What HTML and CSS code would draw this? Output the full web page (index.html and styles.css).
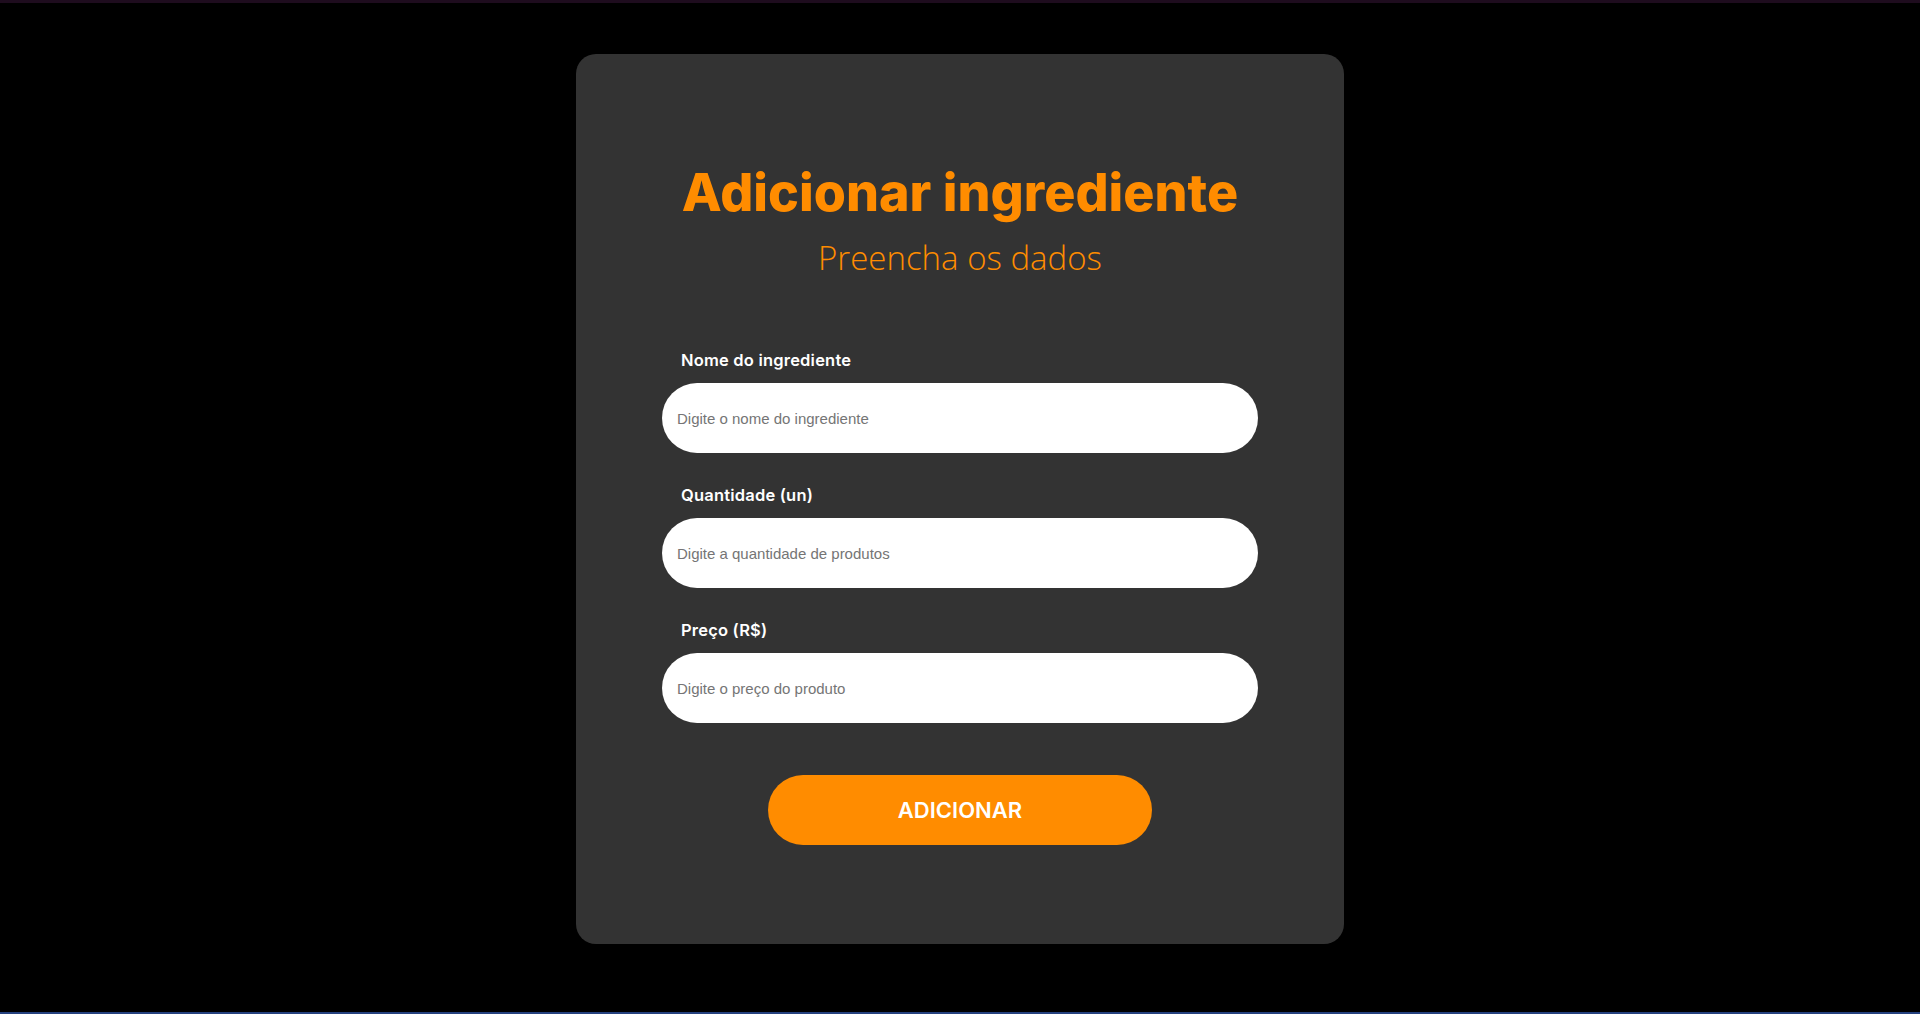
FILE: index.html
```html
<!DOCTYPE html>
<html lang="pt-BR">
<head>
  <meta charset="UTF-8">
  <title>Adicionar ingrediente</title>
  <link rel="stylesheet" href="styles.css">
</head>
<body>

  <div class="faixa-topo"></div>

  <main class="pagina">
    <section class="card">
      <h1>Adicionar ingrediente</h1>
      <p class="subtitulo">Preencha os dados</p>

      <form class="formulario">
        <div class="campo">
          <label for="nome">Nome do ingrediente</label>
          <input type="text" id="nome" placeholder="Digite o nome do ingrediente">
        </div>

        <div class="campo">
          <label for="quantidade">Quantidade (un)</label>
          <input type="number" id="quantidade" placeholder="Digite a quantidade de produtos">
        </div>

        <div class="campo">
          <label for="preco">Preço (R$)</label>
          <input type="text" id="preco" placeholder="Digite o preço do produto">
        </div>

        <button type="submit" class="btn-adicionar">ADICIONAR</button>
      </form>
    </section>
  </main>

  <div class="faixa-base"></div>

</body>
</html>
```

FILE: styles.css
```css
* {
  box-sizing: border-box;
}

body {
  margin: 0;
  min-height: 100vh;
  background-color: #000;
  font-family: "Inter", "Noto Sans", sans-serif;
  display: flex;
  flex-direction: column;
}

.faixa-topo {
  height: 3px;
  background-color: #1e0c1e;
}

.faixa-base {
  height: 2px;
  background-color: #25417f;
}

.pagina {
  flex: 1;
  display: flex;
  justify-content: center;
  align-items: flex-start;
  padding-top: 51px;
}

.card {
  width: 768px;
  background-color: #333;
  border-radius: 20px;
  padding: 107px 86px 99px;
  text-align: center;
}

h1 {
  margin: 0;
  font-size: 52px;
  line-height: 64px;
  font-weight: 800;
  color: #ff8c00;
}

.subtitulo {
  margin: 13px 0 0;
  font-family: "Open Sans", "Lato", sans-serif;
  font-weight: 300;
  font-size: 33px;
  line-height: 40px;
  color: #ff8c00;
}

.formulario {
  margin-top: 70px;
  display: flex;
  flex-direction: column;
  gap: 30px;
  text-align: left;
}

.campo {
  display: flex;
  flex-direction: column;
  gap: 11px;
}

.campo label {
  padding-left: 19px;
  font-size: 16.5px;
  letter-spacing: 0.2px;
  line-height: 24px;
  font-weight: 600;
  color: #fff;
}

.campo input {
  height: 70px;
  width: 100%;
  border: none;
  border-radius: 35px;
  padding: 0 15px;
  background-color: #fff;
  font-family: "Liberation Sans", Arial, sans-serif;
  font-size: 15px;
  color: #333;
  outline: none;
}

.campo input::placeholder {
  color: #757575;
}

.btn-adicionar {
  align-self: center;
  margin-top: 22px;
  width: 384px;
  height: 70px;
  border: none;
  border-radius: 35px;
  background-color: #ff8c00;
  color: #fff;
  font-family: "Inter", "Noto Sans", sans-serif;
  font-size: 22px;
  font-weight: 600;
  cursor: pointer;
}
```
